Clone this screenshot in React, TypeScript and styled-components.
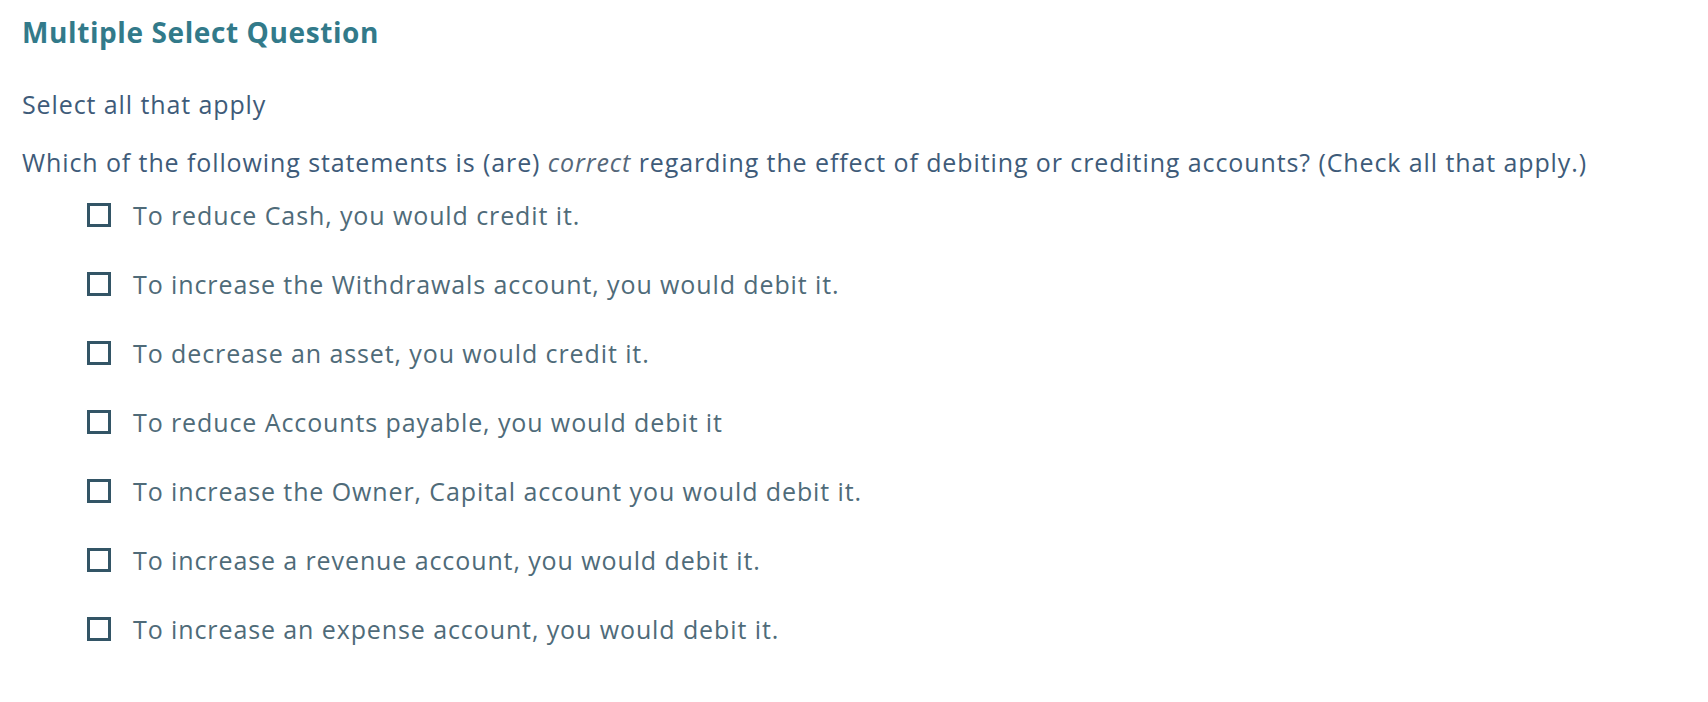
import React from "react"
import styled, { createGlobalStyle } from "styled-components"

const GlobalStyle = createGlobalStyle`
    body {
        margin: 0;
        background: #ffffff;
        font-family: "Open Sans", Lato, sans-serif;
    }
`

const Wrapper = styled.div`
    padding: 14px 22px 0;
`

const Title = styled.h2`
    margin: 0;
    font-size: 28px;
    line-height: 36px;
    font-weight: 700;
    letter-spacing: 0.6px;
    color: #327a8a;
`

const Hint = styled.p`
    margin: 38px 0 0;
    font-size: 25px;
    line-height: 32px;
    letter-spacing: 0.9px;
    color: #3e5b79;
`

const Prompt = styled.p`
    margin: 26px 0 0;
    font-size: 25px;
    line-height: 32px;
    letter-spacing: 0.9px;
    color: #3e5b79;

    em {
        color: #56687a;
    }
`

const OptionList = styled.ul`
    list-style: none;
    margin: 21px 0 0;
    padding: 0 0 0 65px;
    display: flex;
    flex-direction: column;
    row-gap: 37px;
`

const OptionRow = styled.li`
    display: flex;
    align-items: center;
    column-gap: 22px;
    height: 32px;
    font-size: 25px;
    letter-spacing: 0.9px;
    color: #4f6b79;
`

const Box = styled.span`
    box-sizing: border-box;
    width: 24px;
    height: 24px;
    border: 3px solid #335566;
    flex-shrink: 0;
`

const options = [
    "To reduce Cash, you would credit it.",
    "To increase the Withdrawals account, you would debit it.",
    "To decrease an asset, you would credit it.",
    "To reduce Accounts payable, you would debit it",
    "To increase the Owner, Capital account you would debit it.",
    "To increase a revenue account, you would debit it.",
    "To increase an expense account, you would debit it.",
]

export default function App() {
    return (
        <Wrapper>
            <GlobalStyle />
            <Title>Multiple Select Question</Title>
            <Hint>Select all that apply</Hint>
            <Prompt>
                Which of the following statements is (are) <em>correct</em> regarding the effect of debiting or crediting accounts? (Check all that apply.)
            </Prompt>
            <OptionList>
                {options.map((text, index) => (
                    <OptionRow key={index}>
                        <Box />
                        {text}
                    </OptionRow>
                ))}
            </OptionList>
        </Wrapper>
    )
}
